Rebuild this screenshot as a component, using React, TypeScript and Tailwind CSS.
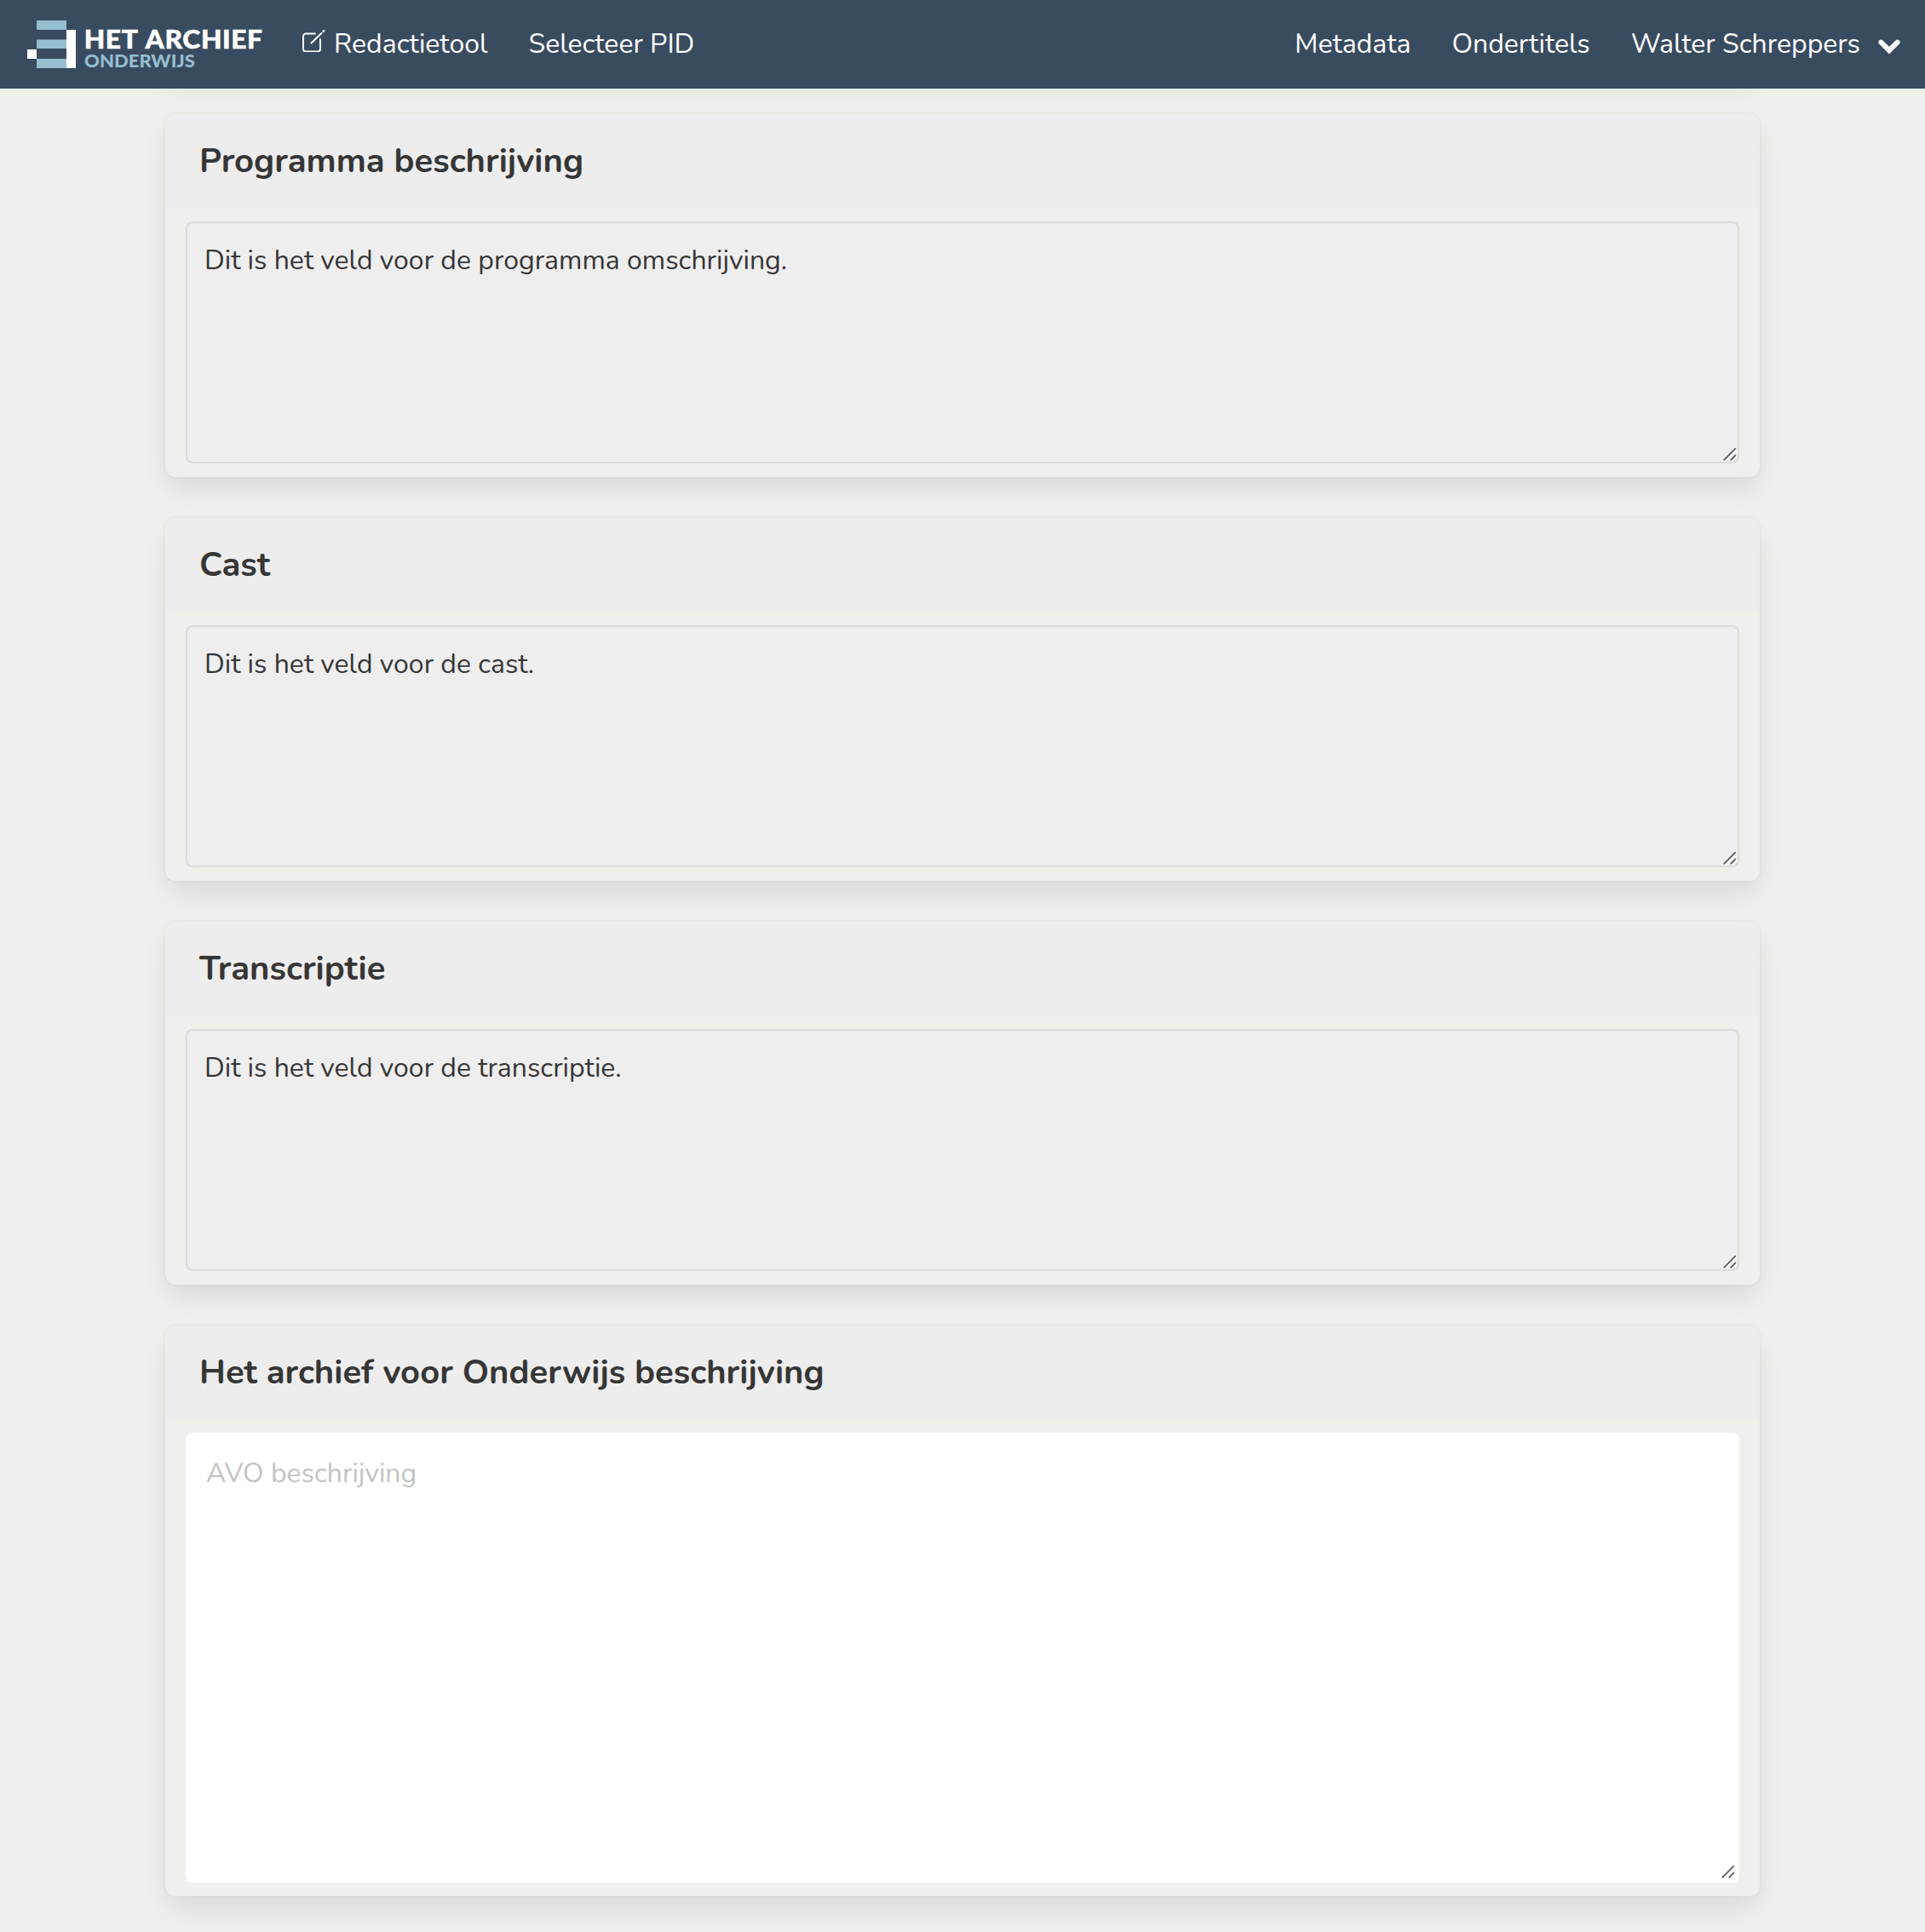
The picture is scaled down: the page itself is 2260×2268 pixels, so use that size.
import type { ReactNode } from 'react';

function Logo() {
  return (
    <svg width="280" height="60" viewBox="0 0 280 60" className="block shrink-0 overflow-visible">
      <g fill="#95bfcf">
        <rect x="11" y="2" width="35" height="11" />
        <rect x="11" y="24.5" width="35" height="10.5" />
        <rect x="11" y="47" width="35" height="11" />
      </g>
      <g fill="#ffffff">
        <rect x="0" y="36" width="11" height="11" />
        <rect x="46" y="13" width="11" height="45" />
      </g>
      <text x="66.7" y="35.4" textLength="210" lengthAdjust="spacingAndGlyphs" stroke="#ffffff" strokeWidth="0.5" className="fill-white font-['Lato',sans-serif] text-[31px] font-black [letter-spacing:0.6px] [word-spacing:2px]">
        HET ARCHIEF
      </text>
      <text x="67" y="57.2" textLength="130" lengthAdjust="spacingAndGlyphs" className="fill-[#95bfcf] font-['Lato',sans-serif] text-[21px] font-black">
        ONDERWIJS
      </text>
    </svg>
  );
}

function EditIcon() {
  return (
    <svg width="30" height="28" viewBox="0 0 30 28" fill="none" stroke="#ffffff" strokeWidth="1.9" strokeLinecap="round" className="mr-[9px] -mt-[10px] block shrink-0">
      <path d="M17 6.5H6a3 3 0 0 0-3 3V24.5a3 3 0 0 0 3 3H20a3 3 0 0 0 3-3V13" />
      <path d="M12.5 17.5L24.5 6" />
      <path d="M26.6 3.9L27.2 3.3" strokeWidth="2.4" />
    </svg>
  );
}

function Chevron() {
  return (
    <svg width="26" height="18" viewBox="0 0 26 18" fill="none" stroke="#ffffff" strokeWidth="6" strokeLinecap="round" className="ml-[21px] mt-[5px] block shrink-0 overflow-visible">
      <path d="M3.4 3.6L13 13.2L22.6 3.6" />
    </svg>
  );
}

function Grip({ className }: { className: string }) {
  return (
    <svg width="16" height="16" viewBox="0 0 16 16" fill="none" className={className}>
      <path d="M2 16L16 2M10 16L16 10" stroke="#ffffff" strokeWidth="1.5" />
      <path d="M0.7 14.3L14.8 0.2M8.7 14.3L14.8 8.2" stroke="#5c5c5c" strokeWidth="1.8" />
    </svg>
  );
}

function Card({ title, children }: { title: string; children: ReactNode }) {
  return (
    <section className="rounded-xl bg-[#eff0eb] shadow-[0_16px_32px_-4px_rgba(10,10,10,0.1),0_0_0_2px_rgba(10,10,10,0.02)]">
      <h2 className="rounded-t-xl bg-[#ededed] pl-10 text-[40px] leading-[110px] font-bold text-[#363636]">{title}</h2>
      <div className="relative px-6 py-4">{children}</div>
    </section>
  );
}

function ReadOnlyField({ value }: { value: string }) {
  return (
    <>
      <textarea
        readOnly
        defaultValue={value}
        className="block h-[284px] w-full resize-none rounded-lg border-2 border-[#dbdbdb] bg-[#eeeeee] p-5 text-[32px] leading-[48px] text-[#363636] outline-none"
      />
      <Grip className="absolute right-[27px] bottom-[18px]" />
    </>
  );
}

const fields = [
  { title: 'Programma beschrijving', value: 'Dit is het veld voor de programma omschrijving.' },
  { title: 'Cast', value: 'Dit is het veld voor de cast.' },
  { title: 'Transcriptie', value: 'Dit is het veld voor de transcriptie.' },
];

export default function App() {
  return (
    <div className="h-[2268px] overflow-hidden bg-[#eff0eb] font-['Nunito','Lato',sans-serif]">
      <nav className="relative z-10 flex h-[104px] items-center bg-[#394b5f] pl-8 text-[32px] leading-[104px] whitespace-nowrap text-white">
        <Logo />
        <a className="ml-[41px] flex items-center">
          <EditIcon />
          Redactietool
        </a>
        <a className="ml-12">Selecteer PID</a>
        <div className="ml-auto flex items-center pr-[29px]">
          <a>Metadata</a>
          <a className="ml-12">Ondertitels</a>
          <a className="ml-12 flex items-center">
            Walter Schreppers
            <Chevron />
          </a>
        </div>
      </nav>
      <main className="mx-auto -mt-[66px] flex w-[1872px] flex-col gap-12">
        <div className="h-12 rounded-xl bg-[#eff0eb] shadow-[0_16px_32px_-4px_rgba(10,10,10,0.1),0_0_0_2px_rgba(10,10,10,0.02)]" />
        {fields.map((f) => (
          <Card key={f.title} title={f.title}>
            <ReadOnlyField value={f.value} />
          </Card>
        ))}
        <Card title="Het archief voor Onderwijs beschrijving">
          <textarea
            placeholder="AVO beschrijving"
            className="block h-[528px] w-full resize-none rounded-lg bg-white p-6 text-[32px] leading-[48px] text-[#363636] outline-none placeholder:text-[#c3c3c3]"
          />
          <Grip className="absolute right-[29px] bottom-5" />
        </Card>
      </main>
    </div>
  );
}
